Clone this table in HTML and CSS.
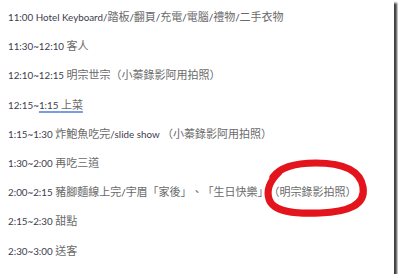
FILE: index.html
```html
<!DOCTYPE html>
<html lang="zh-Hant">
<head>
<meta charset="utf-8">
<link rel="stylesheet" href="styles.css">
</head>
<body>
<div class="page">
  <p class="line"><span class="en">11:00 Hotel Keyboard/</span>踏板<span class="en">/</span>翻頁<span class="en">/</span>充電<span class="en">/</span>電腦<span class="en">/</span>禮物<span class="en">/</span>二手衣物</p>
  <p class="line"><span class="en">11:30~12:10 </span>客人</p>
  <p class="line"><span class="en">12:10~12:15 </span>明宗世宗（小蓁錄影阿用拍照）</p>
  <p class="line"><span class="en">12:15~</span><span class="mark"><span class="en">1:15 </span>上菜</span></p>
  <p class="line"><span class="en">1:15~1:30 </span>炸鮑魚吃完<span class="en">/slide show </span>（小蓁錄影阿用拍照）</p>
  <p class="line"><span class="en">1:30~2:00 </span>再吃三道</p>
  <p class="line"><span class="en">2:00~2:15 </span>豬腳麵線上完<span class="en">/</span>宇眉「家後」、「生日快樂」（明宗錄影拍照）</p>
  <p class="line"><span class="en">2:15~2:30 </span>甜點</p>
  <p class="line"><span class="en">2:30~3:00 </span>送客</p>
  <svg class="circle" width="112" height="66" viewBox="0 0 112 66" aria-hidden="true">
    <path d="M13 22 C21 11 38 8 56 8 C80 8 100 14 103 32 C106 50 88 57 60 58 C35 59 13 57 9 44 C6 34 10 26 19 17" fill="none" stroke="#e3141b" stroke-width="7.2" stroke-linecap="round"/>
  </svg>
</div>
</body>
</html>
```

FILE: styles.css
```css
html, body {
  margin: 0;
  padding: 0;
  background: #ffffff;
}

.page {
  position: relative;
  width: 394px;
  height: 274px;
  background: #ffffff;
  box-shadow: 3px 3px 2px rgba(0, 0, 0, 0.75);
  padding: 2px 0 0 8px;
  box-sizing: border-box;
  font-family: "Noto Sans CJK TC", sans-serif;
  font-size: 11px;
  color: #6a6a6a;
  text-spacing-trim: space-all;
  font-feature-settings: "chws" 0, "halt" 0;
}

.line {
  margin: 0;
  height: 29.2px;
  line-height: 29.2px;
  white-space: nowrap;
}

.en {
  font-family: Lato, "Liberation Sans", sans-serif;
  font-size: 9.8px;
  line-height: 1;
  color: #3c3c4c;
}

.mark {
  line-height: 1;
  text-decoration: underline;
  text-decoration-color: #7a9de2;
  text-decoration-thickness: 1.5px;
  text-underline-offset: 2px;
}

.circle {
  position: absolute;
  left: 260px;
  top: 155px;
}
```
